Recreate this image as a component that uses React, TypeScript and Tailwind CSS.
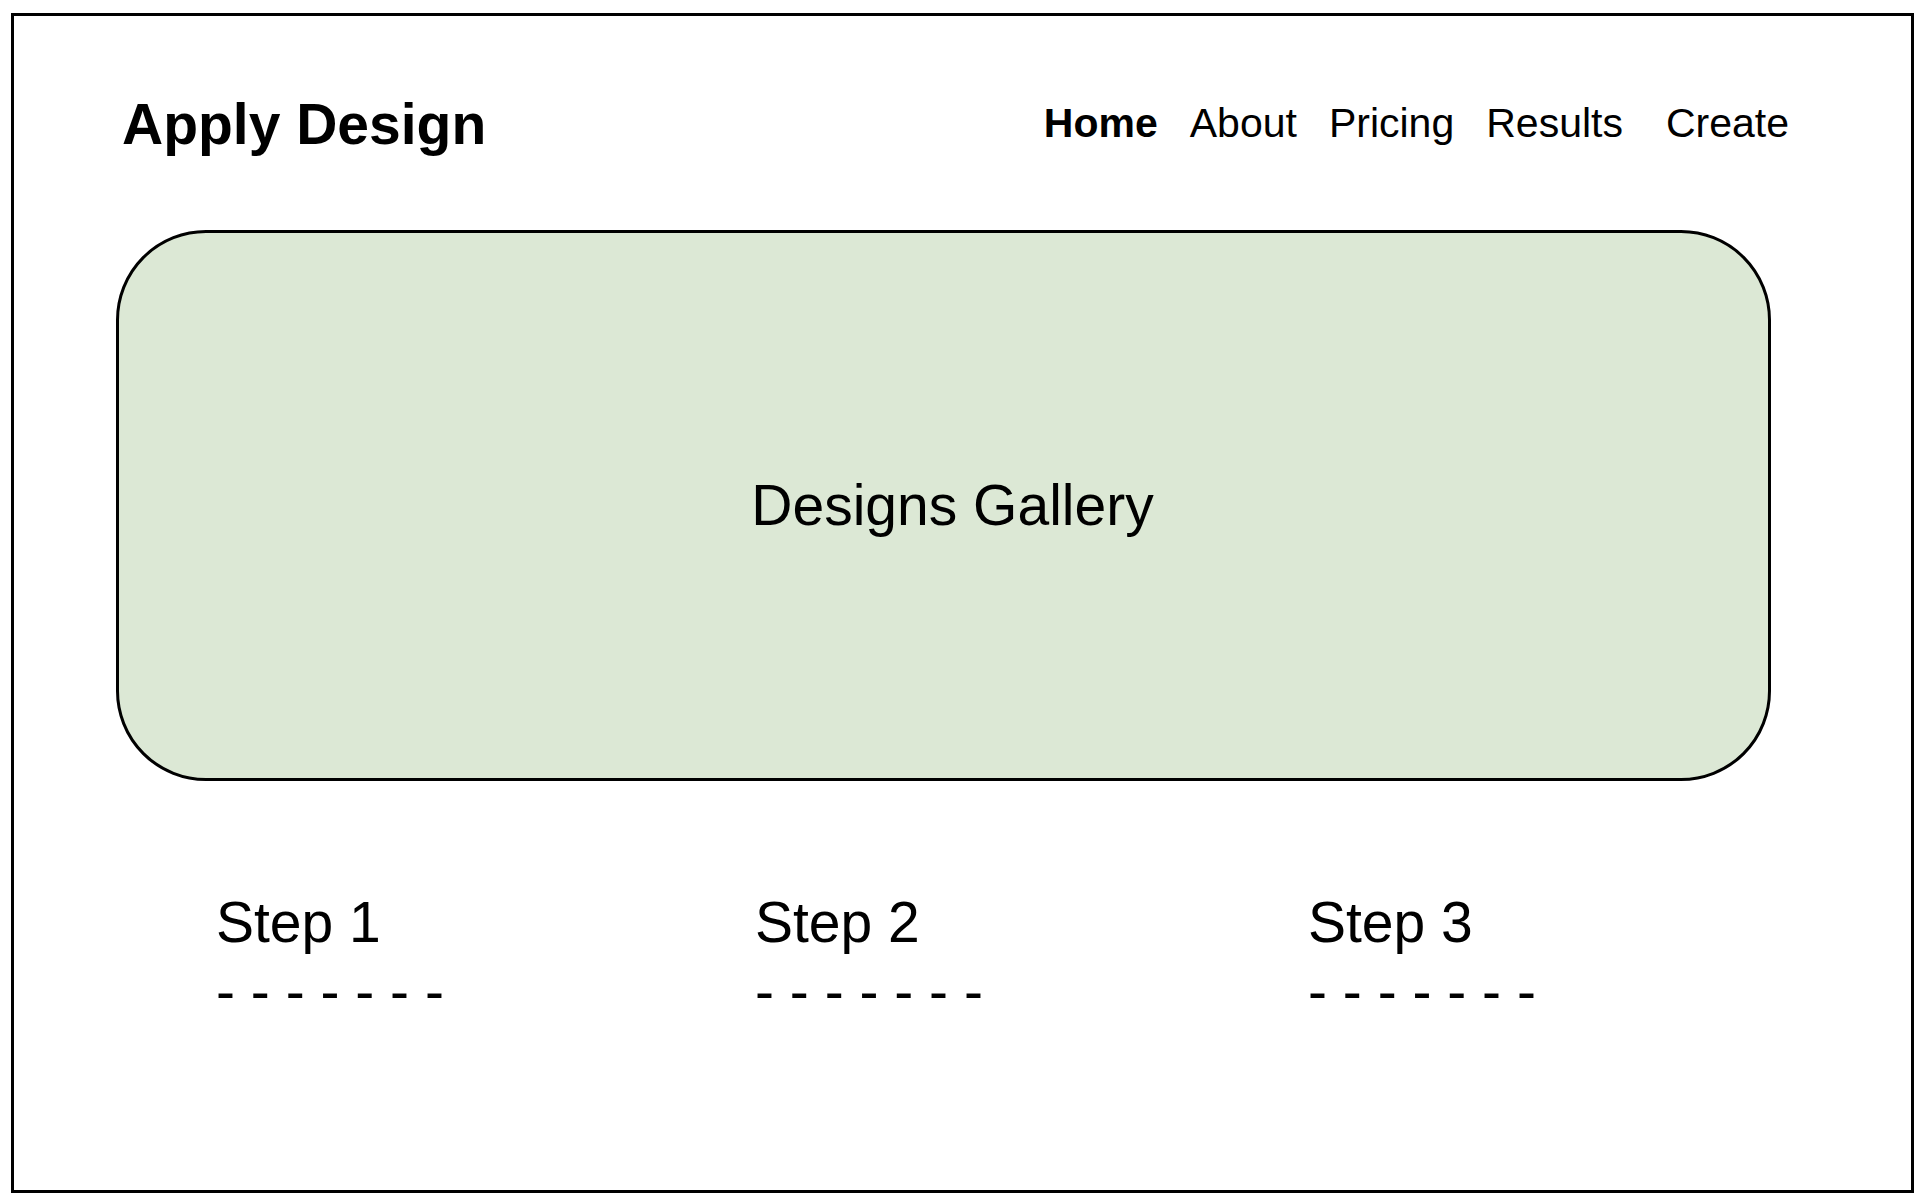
const NAV_LINKS = ['Home', 'About', 'Pricing', 'Results', 'Create']

const STEPS = [
  { label: 'Step 1', width: 'w-[539px]' },
  { label: 'Step 2', width: 'w-[553px]' },
  { label: 'Step 3', width: 'w-[420px]' },
]

export default function App() {
  return (
    <div className="w-[1922px] h-[1202px] bg-white overflow-hidden font-['Liberation_Sans',Arial,sans-serif] text-black">
      <div className="ml-[11px] mt-[13px] w-[1903px] h-[1180px] border-[3px] border-black flex flex-col">
        {/* Header */}
        <header className="flex items-start pt-[80px] pl-[108px] pr-[122px]">
          <h1 className="text-[57px] leading-none font-bold whitespace-nowrap">Apply Design</h1>
          <nav className="ml-auto mt-[7px] flex items-start gap-[32px] text-[41px] leading-none">
            {NAV_LINKS.map((label) => (
              <a
                key={label}
                href="#"
                className={
                  label === 'Home'
                    ? 'font-bold whitespace-nowrap'
                    : label === 'Create'
                      ? 'ml-[11px] whitespace-nowrap'
                      : 'whitespace-nowrap'
                }
              >
                {label}
              </a>
            ))}
          </nav>
        </header>

        {/* Gallery */}
        <section className="ml-[102px] mt-[77px] w-[1655px] h-[551px] shrink-0 rounded-[90px] border-[3px] border-black bg-[#dce8d5] flex items-center justify-center pl-[18px]">
          <span className="text-[57px] leading-none whitespace-nowrap">Designs Gallery</span>
        </section>

        {/* Steps */}
        <div className="ml-[202px] mt-[107px] flex">
          {STEPS.map(({ label, width }) => (
            <div key={label} className={`${width} shrink-0 text-[57px] leading-[69px] whitespace-nowrap`}>
              <div>{label}</div>
              <div>- - - - - - -</div>
            </div>
          ))}
        </div>
      </div>
    </div>
  )
}
